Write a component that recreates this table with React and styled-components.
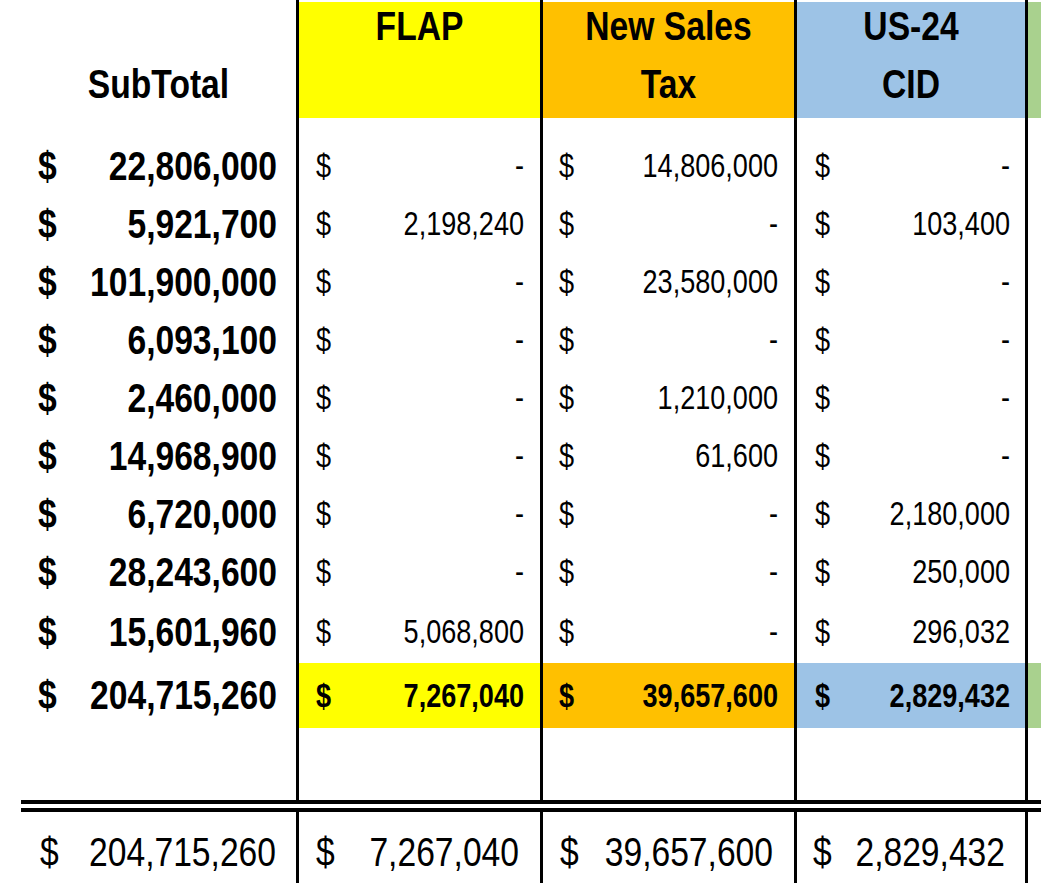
import React from 'react';
import styled, { createGlobalStyle } from 'styled-components';

// no Arial Narrow here, so Liberation Sans is squeezed to its width
const NARROW = 0.82;

const GlobalStyle = createGlobalStyle`
  html, body {
    margin: 0;
    padding: 0;
    background: #ffffff;
  }
`;

const columns = [
  { key: 'flap', title: ['FLAP', ''], color: '#ffff00', padL: 17, padR: 16 },
  { key: 'sales', title: ['New Sales', 'Tax'], color: '#ffc000', padL: 16, padR: 16 },
  { key: 'cid', title: ['US-24', 'CID'], color: '#9dc3e6', padL: 18, padR: 15 },
];

const rows = [
  ['22,806,000', '-', '14,806,000', '-'],
  ['5,921,700', '2,198,240', '-', '103,400'],
  ['101,900,000', '-', '23,580,000', '-'],
  ['6,093,100', '-', '-', '-'],
  ['2,460,000', '-', '1,210,000', '-'],
  ['14,968,900', '-', '61,600', '-'],
  ['6,720,000', '-', '-', '2,180,000'],
  ['28,243,600', '-', '-', '250,000'],
  ['15,601,960', '5,068,800', '-', '296,032'],
];

const totals = ['204,715,260', '7,267,040', '39,657,600', '2,829,432'];
const grand = [
  { padL: 17, padR: 21 },
  { padL: 17, padR: 21 },
  { padL: 16, padR: 20 },
];

const Amount = ({ value, padL, padR, size, bold, shift }) => (
  <Squeeze padL={padL} padR={padR} shift={shift} size={size} bold={bold}>
    <span>$</span>
    <span>{value}</span>
  </Squeeze>
);

export default function App() {
  return (
    <>
      <GlobalStyle />
      <Sheet>
        {/* header */}
        <Row h={118}>
          <Lead />
          <HeadCell>
            <HeadText>
              <span>&nbsp;</span>
              <span>SubTotal</span>
            </HeadText>
          </HeadCell>
          {columns.map(c => (
            <HeadCell key={c.key} line bg={c.color}>
              <HeadText>
                <span>{c.title[0] || '\u00a0'}</span>
                <span>{c.title[1] || '\u00a0'}</span>
              </HeadText>
            </HeadCell>
          ))}
          <HeadCell line bg="#a9d18e" />
        </Row>

        <Row h={19}>
          <Lead />
          <Cell />
          <Cell line />
          <Cell line />
          <Cell line />
          <Cell line />
        </Row>

        {rows.map((r, i) => (
          <Row key={i} h={i === rows.length - 1 ? 62 : 58}>
            <Lead />
            <Cell>
              <Amount value={r[0]} padL={17} padR={19} size={41} bold />
            </Cell>
            {columns.map((c, j) => (
              <Cell key={c.key} line>
                <Amount value={r[j + 1]} padL={c.padL} padR={c.padR} size={33} />
              </Cell>
            ))}
            <Cell line />
          </Row>
        ))}

        {/* highlighted totals */}
        <Row h={65}>
          <Lead />
          <Cell>
            <Amount value={totals[0]} padL={17} padR={19} size={41} bold />
          </Cell>
          {columns.map((c, j) => (
            <Cell key={c.key} line bg={c.color}>
              <Amount value={totals[j + 1]} padL={c.padL} padR={c.padR} size={33} bold />
            </Cell>
          ))}
          <Cell line bg="#a9d18e" />
        </Row>

        <Row h={72}>
          <Lead />
          <Cell />
          <Cell line />
          <Cell line />
          <Cell line />
          <Cell line />
        </Row>

        <Row h={12}>
          <Lead />
          <DoubleRule />
        </Row>

        {/* grand total line */}
        <Row h={71}>
          <Lead />
          <Cell>
            <Amount value={totals[0]} padL={19} padR={20} size={41} shift={9} />
          </Cell>
          {grand.map((g, j) => (
            <Cell key={j} line>
              <Amount value={totals[j + 1]} padL={g.padL} padR={g.padR} size={41} shift={9} />
            </Cell>
          ))}
          <Cell line />
        </Row>
      </Sheet>
    </>
  );
}

const Sheet = styled.div`
  width: 1041px;
  height: 887px;
  overflow: hidden;
  background: #ffffff;
  color: #000000;
  font-family: 'Liberation Sans', Arial, sans-serif;
`;

const Row = styled.div`
  display: grid;
  grid-template-columns: 21px 275px 244px 254px 231px 16px;
  height: ${p => p.h}px;
`;

// leftover strip on the far left
const Lead = styled.div``;

const Cell = styled.div`
  display: flex;
  align-items: center;
  box-sizing: border-box;
  min-width: 0;
  border-left: ${p => (p.line ? '3px solid #000' : 'none')};
  background: ${p => p.bg || 'transparent'};
`;

// content laid out wide, then squeezed horizontally to a narrow face
const Squeeze = styled.div`
  flex: none;
  box-sizing: border-box;
  width: ${100 / NARROW}%;
  display: flex;
  align-items: center;
  justify-content: space-between;
  padding: ${p => p.shift || 0}px ${p => (p.padR || 0) / NARROW}px 0
    ${p => (p.padL || 0) / NARROW}px;
  transform: scaleX(${NARROW});
  transform-origin: left center;
  font-size: ${p => p.size}px;
  font-weight: ${p => (p.bold ? 700 : 400)};
  white-space: nowrap;
`;

const HeadCell = styled.div`
  box-sizing: border-box;
  border-left: ${p => (p.line ? '3px solid #000' : 'none')};
  padding-top: 2px;
  background: ${p => p.bg || 'transparent'};
  background-clip: content-box;
`;

const HeadText = styled.div`
  display: flex;
  flex-direction: column;
  align-items: center;
  margin-top: -5px;
  font-size: 41px;
  font-weight: 700;
  line-height: 58px;
  white-space: nowrap;
  transform: scaleX(${NARROW});
`;

// double underline under the table body
const DoubleRule = styled.div`
  grid-column: 2 / -1;
  box-sizing: border-box;
  border-top: 4px solid #000;
  border-bottom: 4px solid #000;
`;
